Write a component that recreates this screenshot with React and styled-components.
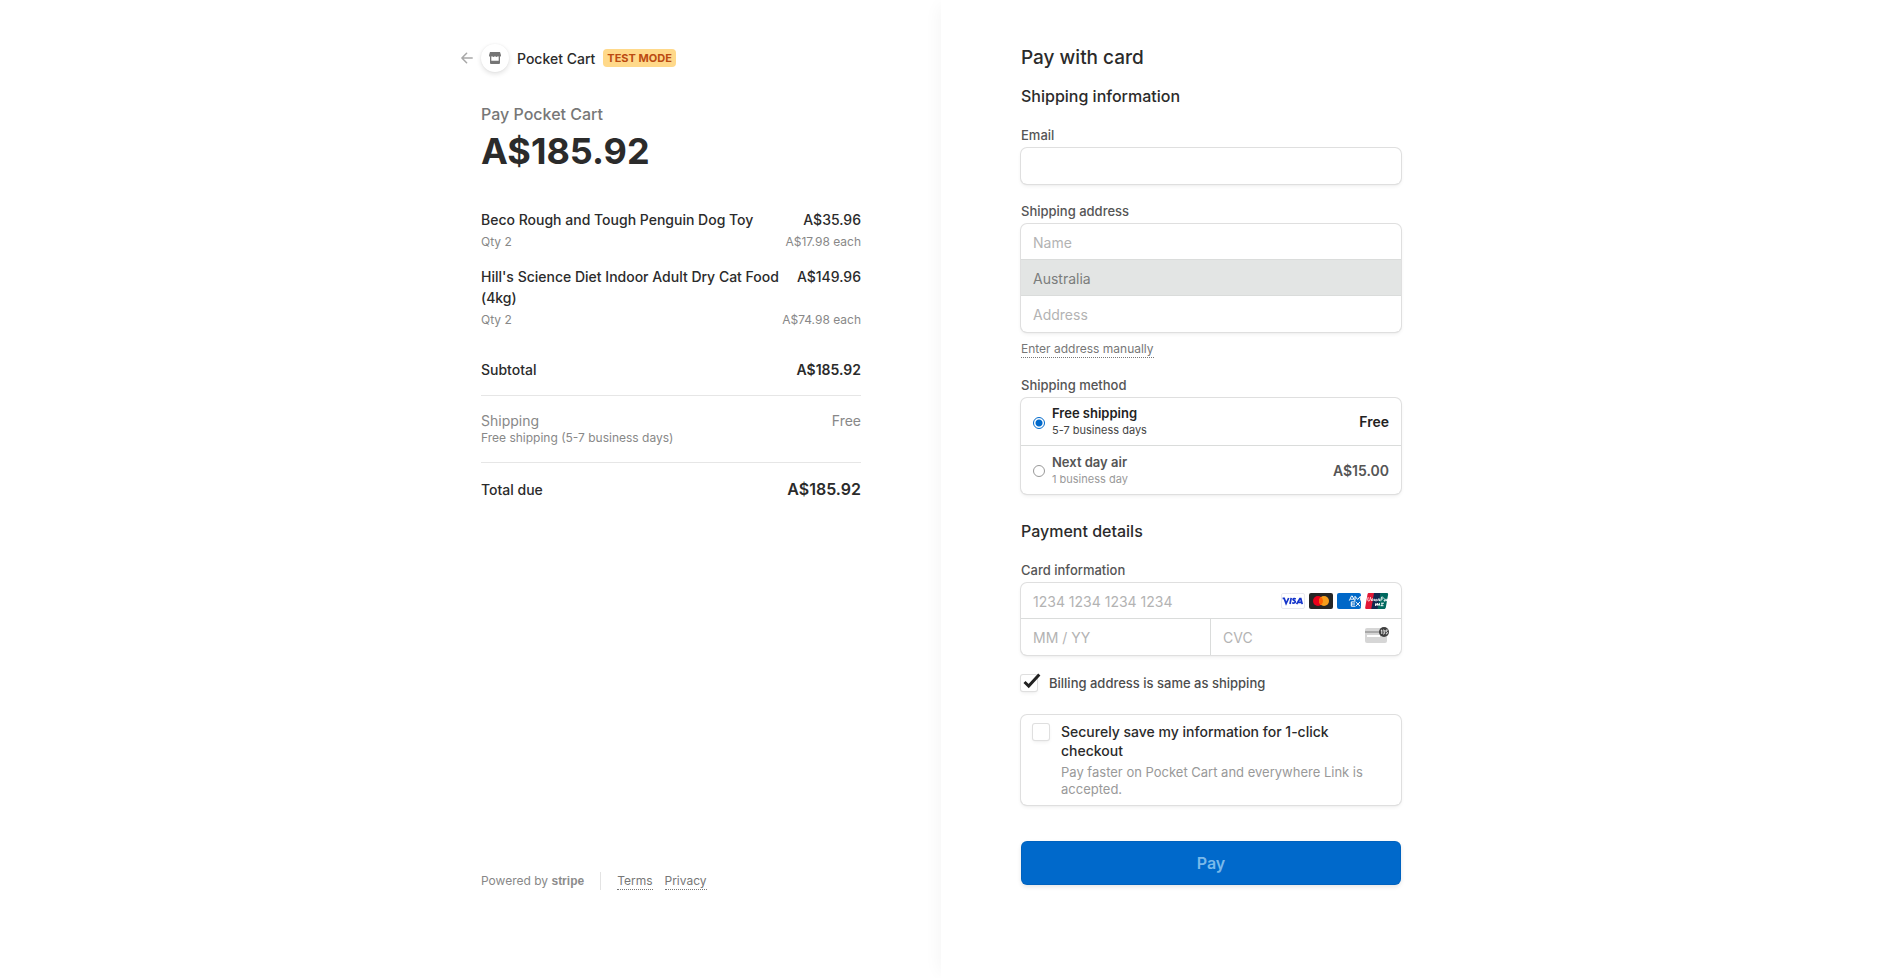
import React from "react";
import styled, { createGlobalStyle, css } from "styled-components";

const GlobalStyle = createGlobalStyle`
  *, *::before, *::after { box-sizing: border-box; }
  body {
    margin: 0;
    background: #fff;
    color: #2b2b2b;
    font-family: Inter, "Liberation Sans", sans-serif;
    font-size: 14px;
  }
  h1, h2, p, ul, fieldset, legend { margin: 0; padding: 0; border: 0; }
  input, select, button { font-family: inherit; }
`;

const ring = "0 0 0 1px #dfdfdf, 0 2px 4px rgba(0, 0, 0, 0.07), 0 1px 2px rgba(0, 0, 0, 0.05)";

const Page = styled.div`
  display: grid;
  grid-template-columns: 1fr 1fr;
  min-height: 100vh;
  padding-right: 8px;
`;

const SummaryPanel = styled.aside`
  display: flex;
  justify-content: flex-end;
  padding: 44px 80px 88px 40px;
`;

const FormPanel = styled.main`
  display: flex;
  padding: 46px 40px 88px 80px;
  box-shadow: -8px 0 16px -6px rgba(0, 0, 0, 0.045);
`;

const Summary = styled.div`
  display: flex;
  flex-direction: column;
  width: 100%;
  max-width: 380px;
`;

const Form = styled.form`
  width: 100%;
  max-width: 380px;
`;

/* Order summary */

const Header = styled.header`
  display: flex;
  align-items: center;
  height: 28px;
  margin-left: -20px;
`;

const BackLink = styled.a`
  display: flex;
  width: 20px;
`;

const ShopBadge = styled.span`
  display: flex;
  align-items: center;
  justify-content: center;
  width: 28px;
  height: 28px;
  border-radius: 50%;
  box-shadow: 0 2px 5px rgba(0, 0, 0, 0.12), 0 0 2px rgba(0, 0, 0, 0.06);
`;

const ShopName = styled.span`
  margin: 0 8px;
  padding-top: 2px;
  font-weight: 500;
  line-height: 20px;
`;

const ModeTag = styled.span`
  padding: 0 4px;
  border-radius: 4px;
  background: #ffd98a;
  color: #bb4b12;
  font-size: 11px;
  font-weight: 700;
  line-height: 18px;
`;

const PayTo = styled.p`
  margin-top: 32px;
  color: #777;
  font-size: 16px;
  font-weight: 500;
  line-height: 20px;
`;

const Amount = styled.p`
  margin-top: 4px;
  font-size: 36px;
  font-weight: 700;
  line-height: 46px;
`;

const Items = styled.ul`
  display: flex;
  flex-direction: column;
  gap: 15px;
  margin-top: 35px;
  list-style: none;
`;

const Row = styled.div`
  display: flex;
  justify-content: space-between;
  gap: 16px;
  font-size: 14px;
  font-weight: ${(p) => p.$weight || 500};
  line-height: 21px;
  color: ${(p) => (p.$muted ? "#888" : "inherit")};
`;

const Note = styled.div`
  display: flex;
  justify-content: space-between;
  padding-top: ${(p) => (p.$tight ? 0 : 3)}px;
  color: #888;
  font-size: 12px;
  line-height: ${(p) => (p.$tight ? 14 : 18)}px;
`;

const Totals = styled.div`
  margin-top: 30px;
`;

const TotalBlock = styled.div`
  padding: 14px 0 17px;
  border-bottom: 1px solid #e6e6e6;
  &:first-child { padding: 0 0 15px; }
  &:last-child { padding: 16px 0 0; border-bottom: 0; }
`;

const GrandTotal = styled.span`
  font-size: 16px;
  font-weight: 600;
`;

const Strong = styled.span`
  font-weight: 600;
`;

const Footer = styled.footer`
  display: flex;
  align-items: center;
  height: 18px;
  margin-top: auto;
  color: #888;
  font-size: 12px;
  line-height: 18px;
`;

const Powered = styled.span`
  padding-right: 16px;
  margin-right: 16px;
  border-right: 1px solid #e3e3e3;
`;

const Wordmark = styled.span`
  color: #8c8c8c;
  font-family: "Liberation Sans", sans-serif;
  font-size: 12px;
  font-weight: 700;
`;

const DottedLink = styled.a`
  display: inline-block;
  margin-right: 12px;
  border-bottom: 1px dotted #777;
  color: #777;
  font-size: 12px;
  line-height: 16px;
  text-decoration: none;
`;

/* Payment form */

const Title = styled.h1`
  font-size: 19px;
  font-weight: 500;
  line-height: 24px;
`;

const SectionTitle = styled.h2`
  margin-top: ${(p) => (p.$first ? 16 : 27)}px;
  font-size: 16px;
  font-weight: 500;
  line-height: 20px;
`;

const Field = styled.div`
  margin-top: 21px;
`;

const FieldSet = styled.fieldset`
  min-width: 0;
  margin-top: ${(p) => (p.$first ? 21 : 19)}px;
`;

const labelText = css`
  display: block;
  margin-bottom: 5px;
  color: #555;
  font-size: 13px;
  font-weight: 500;
  line-height: 16px;
`;

const Label = styled.label`
  ${labelText}
`;

const Legend = styled.legend`
  ${labelText}
`;

const Box = styled.div`
  border-radius: 6px;
  box-shadow: ${ring};
  overflow: ${(p) => (p.$clip ? "hidden" : "visible")};
`;

const Line = styled.div`
  display: flex;
  align-items: center;
  height: 36px;
  border-bottom: 1px solid #dadcdb;
  background: ${(p) => (p.$disabled ? "#e3e5e4" : "transparent")};
  &:last-child { border-bottom: 0; }
`;

const Cell = styled.div`
  display: flex;
  flex: 0 0 50%;
  align-items: center;
  height: 100%;
  min-width: 0;
  border-right: 1px solid #dadcdb;
  &:last-child { border-right: 0; padding-right: 12px; }
`;

const control = css`
  flex: 1;
  width: 100%;
  min-width: 0;
  height: 35px;
  padding: 1px 12px 0;
  border: 0;
  outline: 0;
  background: transparent;
  color: #2b2b2b;
  font-size: 14px;
`;

const Input = styled.input`
  ${control}
  &::placeholder { color: #b3b3b3; opacity: 1; }
`;

const Select = styled.select`
  ${control}
  appearance: none;
  &:disabled { color: #7b7d7c; opacity: 1; }
`;

const AddressLink = styled(DottedLink)`
  display: table;
  margin-top: 9px;
`;

const Cards = styled.span`
  display: flex;
  gap: 4px;
  padding-right: 12px;
`;

const Option = styled.label`
  display: flex;
  align-items: center;
  height: 48px;
  padding: 0 12px;
  border-bottom: 1px solid #dadcdb;
  color: ${(p) => (p.$selected ? "#222" : "#555")};
  font-weight: 600;
  &:last-child { border-bottom: 0; }
`;

const Radio = styled.input`
  appearance: none;
  width: 12px;
  height: 12px;
  margin: 2px 7px 0 0;
  border: 1px solid #999;
  border-radius: 50%;
  background: #fff;
  &:checked {
    border-color: #0069cb;
    background: radial-gradient(#0069cb 0 3px, #fff 4px);
  }
`;

const OptionText = styled.span`
  display: flex;
  flex: 1;
  flex-direction: column;
  font-size: 13px;
  line-height: 17px;
`;

const OptionNote = styled.span`
  color: ${(p) => (p.$selected ? "#444" : "#999")};
  font-size: 11px;
  font-weight: 400;
  line-height: 16px;
`;

const CheckWrap = styled.span`
  position: relative;
  display: flex;
  flex: none;
  align-self: flex-start;
`;

const Checkbox = styled.input`
  appearance: none;
  width: 16px;
  height: 16px;
  margin: 0;
  border-radius: 2px;
  background: #fff;
  box-shadow: ${ring};
`;

const Tick = styled.svg`
  position: absolute;
  top: -2px;
  left: 2px;
  pointer-events: none;
`;

const CheckLabel = styled.label`
  display: flex;
  align-items: center;
  gap: 12px;
  margin-top: 20px;
  color: #4d4d4d;
  font-size: 13px;
  font-weight: 500;
  line-height: 16px;
`;

const SaveBox = styled.label`
  display: flex;
  gap: 12px;
  margin-top: 24px;
  padding: 7px 12px;
  border-radius: 6px;
  box-shadow: ${ring};
  ${CheckWrap} { margin-top: 2px; }
`;

const SaveText = styled.span`
  display: flex;
  flex-direction: column;
  font-weight: 500;
  line-height: 19px;
`;

const SaveNote = styled.span`
  padding-top: 4px;
  color: #999;
  font-size: 13px;
  font-weight: 400;
  line-height: 17px;
`;

const PayButton = styled.button`
  width: 100%;
  height: 44px;
  margin-top: 36px;
  border: 0;
  border-radius: 6px;
  background: #0069cb;
  box-shadow: 0 2px 4px rgba(0, 0, 0, 0.1), inset 0 0 0 1px rgba(0, 0, 0, 0.06);
  color: #7ab9ea;
  font-size: 16px;
  font-weight: 600;
`;

const ArrowIcon = () => (
  <svg width="12" height="12" viewBox="0 0 12 12" fill="none" stroke="#a8a8a8" strokeWidth="1.5" strokeLinecap="round" strokeLinejoin="round">
    <path d="M11.2 6H1M5.6 1.2 0.9 6l4.7 4.8" />
  </svg>
);

const ShopIcon = () => (
  <svg width="12" height="12" viewBox="0 0 12 12" fill="#757575">
    <path d="M1 0h10l1 3.2c0 1-.7 1.700-1.500 1.700S9 4.300 9 4.300 8.300 4.900 7.500 4.900 6 4.300 6 4.300 5.300 4.900 4.500 4.900 3 4.300 3 4.300 2.300 4.900 1.500 4.900 0 4.200 0 3.200z" />
    <path d="M1 4.500h1.300V8.800h7.400V4.500H11V11a1 1 0 0 1-1 1H2a1 1 0 0 1-1-1z" />
  </svg>
);

const Visa = () => (
  <svg width="24" height="16" viewBox="0 0 24 16" role="img" aria-label="Visa">
    <rect x=".5" y=".5" width="23" height="15" rx="1.5" fill="#fff" stroke="#e8e8f0" />
    <g fill="none" stroke="#1434cb" strokeWidth="1.7">
      <path d="M1.600 5.400h1.600l1.900 5.200 2.600-5.600" />
      <path d="M10.200 4.900L9 11" />
      <path d="M14.800 5.900c-1.300-.6-2.700-.4-2.800.5-.1 1.200 2.500 1 2.300 2.500-.2 1.300-2 1.400-3.200.8" />
      <path d="M15.600 11.100l3.300-5.400h.9l1.400 5.400M17.200 9.300h3.200" />
    </g>
  </svg>
);

const Mastercard = () => (
  <svg width="24" height="16" viewBox="0 0 24 16" role="img" aria-label="Mastercard">
    <rect width="24" height="16" rx="2" fill="#252525" />
    <circle cx="9" cy="8" r="5" fill="#eb001b" />
    <circle cx="15" cy="8" r="5" fill="#f79e1b" />
    <path d="M12 4a5 5 0 0 1 0 8 5 5 0 0 1 0-8z" fill="#ff5f00" />
  </svg>
);

const Amex = () => (
  <svg width="24" height="16" viewBox="0 0 24 16" role="img" aria-label="American Express">
    <rect width="24" height="16" rx="2" fill="#0068c8" />
    <g fill="none" stroke="#fff" strokeWidth="1">
      <path d="M12.300 7.600l2.200-4.600h.8l2.200 4.600M13.400 6.200h3" />
      <path d="M18 7.600V3.300l2.700 3.200 2.700-3.200v4.300" />
      <path d="M18 8.900h-3.700v4.300H18M14.400 11H18M18.600 8.800l4.600 4.500M23.200 8.800l-4.600 4.500" />
    </g>
  </svg>
);

const UnionPay = () => (
  <svg width="24" height="16" viewBox="0 0 24 16" role="img" aria-label="UnionPay">
    <path d="M4 0h6L7 16H1.500C.5 16 0 15.300.200 14.500L2.500 1.300C2.700.500 3.200 0 4 0z" fill="#e21836" />
    <path d="M9 0h7l-3 16H6.300z" fill="#12284f" />
    <path d="M15.500 0h6.300c1 0 1.500.6 1.300 1.500l-2.300 13c-.2.900-.8 1.500-1.700 1.500h-6.600z" fill="#00695f" />
    <g fill="none" stroke="#fff" strokeWidth=".9">
      <path d="M3.200 4.200l-.5 2.600c-.2 1.500 2 1.500 2.300 0L5.500 4.200M6.400 8V6.300c.8-1 1.700-.6 1.500.2L7.700 8M9.300 5.800V8M10.700 6.500c1.500-.8 1.700 1.500.3 1.500-1 0-1-1-.3-1.500M12.900 8l.3-2c1.200-.5 1.600 0 1.400.8L14.400 8M15.800 8.200l.7-4.100c2.500-.3 2.500 2 0 2.100M19 6.100c1-.3 1.500 0 1.300.7l-.2 1.300c-1.500.3-1.700-.9 0-.9M21.200 5.800l.2 2.300 1.400-2.300" />
      <path d="M11 10l-.6 3M12.600 10l-.6 3M10 11.400h5M14.500 10l-.5 3M16 10.200h3M15.500 12.700h3M17.200 10l-.5 3" />
    </g>
  </svg>
);

const CvcIcon = () => (
  <svg width="24" height="21" viewBox="0 0 24 21" aria-hidden="true">
    <rect y="1" width="22" height="15" rx="2" fill="#d6d6d6" />
    <path d="M0 4h22v2H0z" fill="#a9a9a9" />
    <path d="M2 8h13v2H2z" fill="#fff" />
    <circle cx="19" cy="5" r="5" fill="#3f3f3f" />
    <path d="M15.800 3.600l1-.6v4M18 3.100c2-.5 2.100 1.600.6 1.800 1.900.2 1.500 2.400-.6 2M22.800 3.100H21l-.1 1.600c2.100-.2 2.100 2.500 0 2.200" fill="none" stroke="#fff" strokeWidth=".9" />
  </svg>
);

const items = [
  { name: "Beco Rough and Tough Penguin Dog Toy", qty: "Qty 2", total: "A$35.96", each: "A$17.98 each" },
  { name: "Hill's Science Diet Indoor Adult Dry Cat Food (4kg)", qty: "Qty 2", total: "A$149.96", each: "A$74.98 each" },
];

const methods = [
  { id: "free", name: "Free shipping", note: "5-7 business days", price: "Free" },
  { id: "air", name: "Next day air", note: "1 business day", price: "A$15.00" },
];

export default function App() {
  const [method, setMethod] = React.useState("free");
  const [sameAddress, setSameAddress] = React.useState(true);

  return (
    <>
      <GlobalStyle />
      <Page>
        <SummaryPanel>
          <Summary>
            <Header>
              <BackLink href="#back" aria-label="Back"><ArrowIcon /></BackLink>
              <ShopBadge><ShopIcon /></ShopBadge>
              <ShopName>Pocket Cart</ShopName>
              <ModeTag>TEST MODE</ModeTag>
            </Header>
            <PayTo>Pay Pocket Cart</PayTo>
            <Amount>A$185.92</Amount>
            <Items>
              {items.map((item) => (
                <li key={item.name}>
                  <Row><span>{item.name}</span><span>{item.total}</span></Row>
                  <Note><span>{item.qty}</span><span>{item.each}</span></Note>
                </li>
              ))}
            </Items>
            <Totals>
              <TotalBlock>
                <Row><span>Subtotal</span><Strong>A$185.92</Strong></Row>
              </TotalBlock>
              <TotalBlock>
                <Row $muted $weight={400}><span>Shipping</span><span>Free</span></Row>
                <Note $tight>Free shipping (5-7 business days)</Note>
              </TotalBlock>
              <TotalBlock>
                <Row><span>Total due</span><GrandTotal>A$185.92</GrandTotal></Row>
              </TotalBlock>
            </Totals>
            <Footer>
              <Powered>Powered by <Wordmark>stripe</Wordmark></Powered>
              <DottedLink href="#terms">Terms</DottedLink>
              <DottedLink href="#privacy">Privacy</DottedLink>
            </Footer>
          </Summary>
        </SummaryPanel>

        <FormPanel>
          <Form onSubmit={(e) => e.preventDefault()}>
            <Title>Pay with card</Title>
            <SectionTitle $first>Shipping information</SectionTitle>
            <Field>
              <Label htmlFor="email">Email</Label>
              <Box><Line><Input id="email" type="email" /></Line></Box>
            </Field>
            <FieldSet>
              <Legend>Shipping address</Legend>
              <Box $clip>
                <Line><Input aria-label="Name" placeholder="Name" /></Line>
                <Line $disabled>
                  <Select aria-label="Country" disabled><option>Australia</option></Select>
                </Line>
                <Line><Input aria-label="Address" placeholder="Address" /></Line>
              </Box>
              <AddressLink href="#manual">Enter address manually</AddressLink>
            </FieldSet>
            <FieldSet>
              <Legend>Shipping method</Legend>
              <Box>
                {methods.map((m) => (
                  <Option key={m.id} $selected={m.id === method}>
                    <Radio type="radio" name="method" checked={m.id === method} onChange={() => setMethod(m.id)} />
                    <OptionText>
                      {m.name}
                      <OptionNote $selected={m.id === method}>{m.note}</OptionNote>
                    </OptionText>
                    {m.price}
                  </Option>
                ))}
              </Box>
            </FieldSet>
            <SectionTitle>Payment details</SectionTitle>
            <FieldSet $first>
              <Legend>Card information</Legend>
              <Box>
                <Line>
                  <Input aria-label="Card number" placeholder="1234 1234 1234 1234" />
                  <Cards><Visa /><Mastercard /><Amex /><UnionPay /></Cards>
                </Line>
                <Line>
                  <Cell><Input aria-label="Expiry date" placeholder="MM / YY" /></Cell>
                  <Cell><Input aria-label="Security code" placeholder="CVC" /><CvcIcon /></Cell>
                </Line>
              </Box>
            </FieldSet>
            <CheckLabel>
              <CheckWrap>
                <Checkbox type="checkbox" checked={sameAddress} onChange={(e) => setSameAddress(e.target.checked)} />
                {sameAddress && (
                  <Tick width="18" height="16" viewBox="0 0 18 16" fill="none" stroke="#222" strokeWidth="3">
                    <path d="M1.500 9l4.200 4L16.300 1.500" />
                  </Tick>
                )}
              </CheckWrap>
              Billing address is same as shipping
            </CheckLabel>
            <SaveBox>
              <CheckWrap><Checkbox type="checkbox" /></CheckWrap>
              <SaveText>
                Securely save my information for 1-click checkout
                <SaveNote>Pay faster on Pocket Cart and everywhere Link is accepted.</SaveNote>
              </SaveText>
            </SaveBox>
            <PayButton type="submit">Pay</PayButton>
          </Form>
        </FormPanel>
      </Page>
    </>
  );
}
